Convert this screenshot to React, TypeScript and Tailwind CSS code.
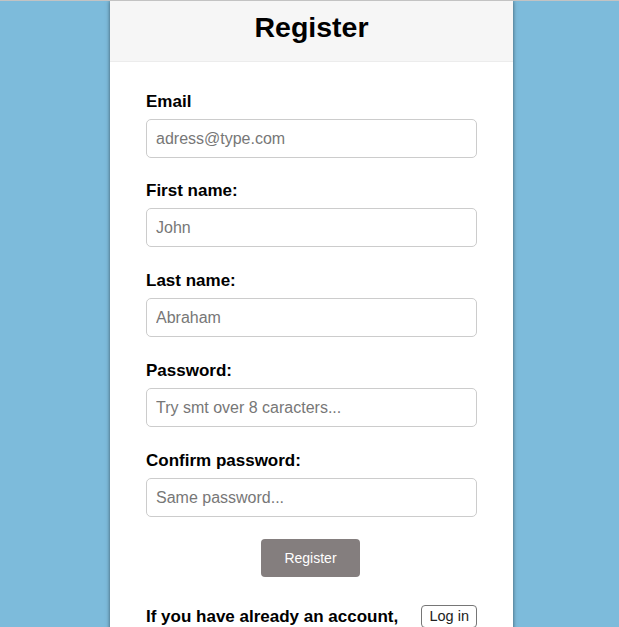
const fields = [
  { label: 'Email', type: 'email', placeholder: 'adress@type.com' },
  { label: 'First name:', type: 'text', placeholder: 'John' },
  { label: 'Last name:', type: 'text', placeholder: 'Abraham' },
  { label: 'Password:', type: 'password', placeholder: 'Try smt over 8 caracters...' },
  { label: 'Confirm password:', type: 'password', placeholder: 'Same password...' }
];

export default function App() {
  return (
    <div className="h-[627px] overflow-hidden border-t border-[#c3c3c3] bg-[#7dbbdb] font-['Liberation_Sans',Arial,sans-serif]">
      <div className="ml-[110px] w-[403px] bg-white pb-[40px] shadow-[0_0_4px_rgba(0,0,0,0.55)]">
        <div className="flex h-[61px] items-start justify-center border-b border-[#ececec] bg-[#f6f6f6]">
          <h1 className="mt-[8px] text-[28.5px] leading-[36px] font-bold text-black">Register</h1>
        </div>
        <form className="flex flex-col px-[36px] pt-[30px]">
          {fields.map((f, i) => (
            <div key={f.label} className={i === 0 ? 'mb-[23px] flex flex-col' : 'mb-[24px] flex flex-col'}>
              <label className="text-[17px] leading-[20px] font-bold text-black">{f.label}</label>
              <input
                type={f.type}
                placeholder={f.placeholder}
                className="mt-[7px] h-[39px] rounded-[5px] border border-[#cccccc] px-[9px] text-[16px] placeholder:text-[#777777] focus:outline-none"
              />
            </div>
          ))}
          <div className="mt-[-2px] flex justify-center">
            <button type="submit" className="mr-[2px] h-[38px] w-[99px] rounded-[4px] bg-[#847e7e] text-[14px] text-white">
              Register
            </button>
          </div>
          <div className="mt-[30px] flex items-start justify-between">
            <p className="w-[260px] text-[17px] leading-[20px] font-bold text-black">
              If you have already an account,
            </p>
            <button type="button" className="mt-[-2px] h-[23px] rounded-[4px] border border-[#767676] px-[7px] text-[14.5px] leading-[19px] text-[#222]">
              Log in
            </button>
          </div>
        </form>
      </div>
    </div>
  );
}
